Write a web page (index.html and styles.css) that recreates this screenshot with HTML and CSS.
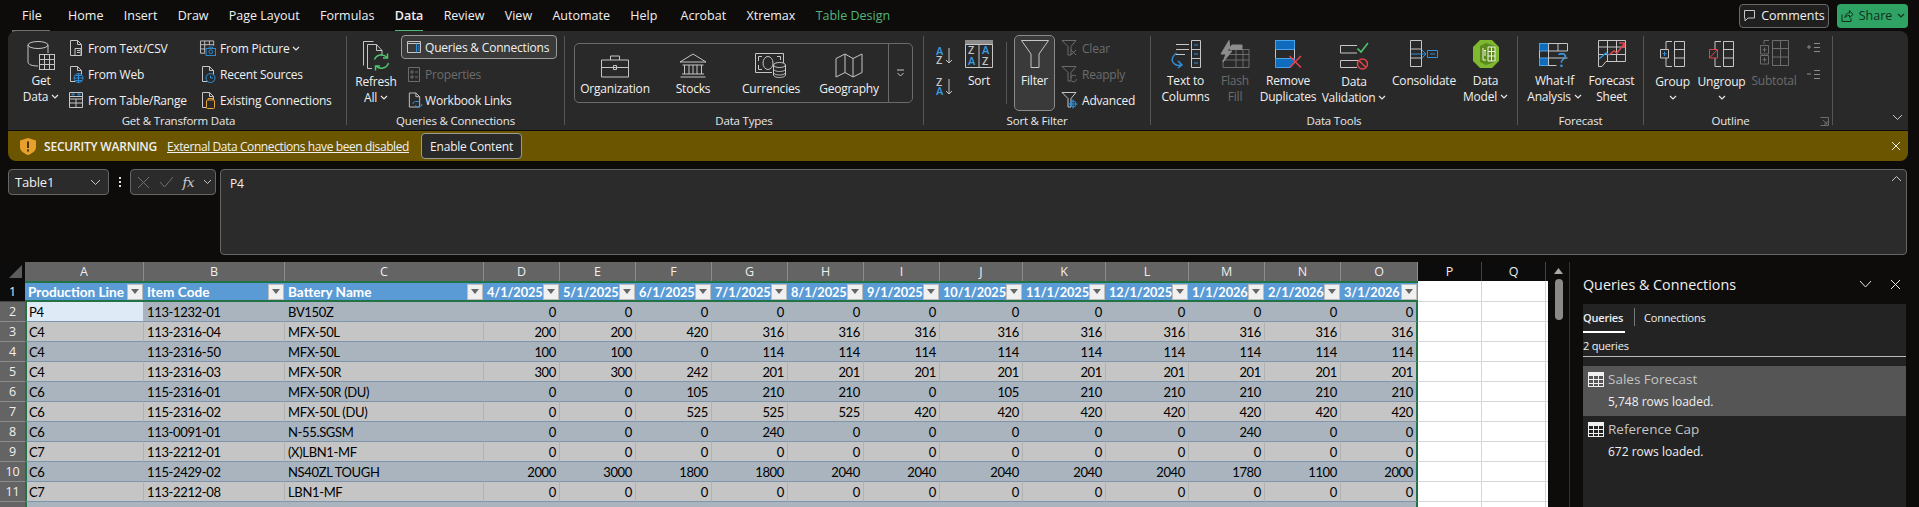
FILE: index.html
```html
<!DOCTYPE html>
<html lang="en">
<head>
    <meta charset="UTF-8">
    <title>Excel - Data tab</title>
    <link rel="stylesheet" href="styles.css">
</head>
<body>
    <!-- shared icon parts -->
    <svg class="defs">
        <symbol id="chev" viewBox="0 0 8 5"><path d="M1 1l3 3 3-3"/></symbol>
        <symbol id="page" viewBox="0 0 16 18"><path d="M2.5 1.5h7l4 4v11h-11zM9.5 1.5v4h4"/></symbol>
        <symbol id="funnel" viewBox="0 0 17 18"><path d="M1 1.500h14l-5 6v8.500H7V7.500z"/></symbol>
    </svg>

    <!-- Tabs -->
    <nav class="tabs">
        <span class="tab tab-file">File</span>
        <span class="tab">Home</span>
        <span class="tab">Insert</span>
        <span class="tab">Draw</span>
        <span class="tab">Page Layout</span>
        <span class="tab">Formulas</span>
        <span class="tab tab-active">Data</span>
        <span class="tab">Review</span>
        <span class="tab">View</span>
        <span class="tab">Automate</span>
        <span class="tab">Help</span>
        <span class="tab tab-acrobat">Acrobat</span>
        <span class="tab">Xtremax</span>
        <span class="tab tab-context">Table Design</span>
        <div class="actions">
            <button class="btn-comments">
                <svg class="ico" width="13" height="13" viewBox="0 0 13 13"><path d="M1.500 1.500h10v7.500H5l-3 3V9H1.500z"/></svg>
                Comments
            </button>
            <button class="btn-share">
                <svg class="ico ico-dark" width="14" height="14" viewBox="0 0 14 14"><path d="M2 5.500v7h9V9M5 8.500c0-3 2-4.500 4.500-4.500V1.500L13 5.500 9.500 8.500V6.500C7.500 6.500 6 7 5 8.500z"/></svg>
                Share
                <svg class="chev chev-dark"><use href="#chev"/></svg>
            </button>
        </div>
    </nav>

    <!-- Ribbon -->
    <section class="ribbon">
        <div class="group g-transform">
            <div class="group-body">
                <div class="big w-getdata">
                    <div class="big-icon">
                        <svg class="ico" width="28" height="30" viewBox="0 0 28 30"><ellipse cx="11" cy="5" rx="10" ry="3.500"/><path d="M1 5v17c0 2.500 4 4 10 4M21 5v8"/><rect x="12.500" y="14.500" width="15" height="15" fill="#292929"/><path d="M12.500 19.500h15M12.500 24.500h15M17.500 14.500v15M22.500 14.500v15"/></svg>
                    </div>
                    <span>Get</span>
                    <span>Data <svg class="chev"><use href="#chev"/></svg></span>
                </div>
                <div class="small-col w-col1">
                    <div class="small">
                        <svg class="ico" width="16" height="18"><use href="#page"/><path d="M7 9.500h6v7H7zM9 11.500h3M9 13.500h3"/></svg>
                        From Text/CSV
                    </div>
                    <div class="small">
                        <svg class="ico" width="16" height="18"><use href="#page"/><circle class="s-blue" cx="10.500" cy="13" r="4.500" fill="#292929"/><path class="s-blue" d="M6 13h9M10.500 8.500v9M7.500 10.500h6M7.500 15.500h6"/></svg>
                        From Web
                    </div>
                    <div class="small">
                        <svg class="ico" width="16" height="18" viewBox="0 0 16 18"><path d="M1.500 1.500h13v15h-13zM1.500 8h13M1.500 12h13M8 8v8.500M1.500 5.500h13"/><path class="s-blue" d="M3.500 3h3l-1.500 1.500zM9.500 3h3L11 4.500z"/></svg>
                        From Table/Range
                    </div>
                </div>
                <div class="small-col">
                    <div class="small">
                        <svg class="ico" width="16" height="18" viewBox="0 0 17 18"><path d="M.5 1.500h14v5M.5 14.500V1.500M.5 5.500h14M.5 10h5M.5 14.500h5M5 1.500V14M10 1.500v4"/><rect class="s-blue" x="6.500" y="9.500" width="10" height="7.500" fill="#292929"/><circle class="s-blue" cx="11.500" cy="13" r="2"/><path class="s-blue" d="M9 9.500l1-1.500h3l1 1.500"/></svg>
                        <span>From Picture <svg class="chev"><use href="#chev"/></svg></span>
                    </div>
                    <div class="small">
                        <svg class="ico" width="16" height="18"><use href="#page"/><circle class="s-blue" cx="10.500" cy="13" r="4.500" fill="#292929"/><path class="s-blue" d="M10.500 10.500V13h2.500"/></svg>
                        Recent Sources
                    </div>
                    <div class="small">
                        <svg class="ico" width="16" height="18"><use href="#page"/><rect class="s-orange" x="6.500" y="9" width="8" height="8.500" rx="1" fill="#292929"/><path class="s-orange" d="M8 9V7.500h5V9"/></svg>
                        Existing Connections
                    </div>
                </div>
            </div>
            <div class="group-label lbl-transform">Get &amp; Transform Data</div>
        </div>

        <div class="group g-queries">
            <div class="group-body">
                <div class="big low w-refresh">
                    <div class="big-icon">
                        <svg class="ico" width="28" height="30" viewBox="0 0 28 30"><path d="M1.500 24.500V.500h10M5.500 27.500V3.500h9l5.500 6v5M5.500 27.500H10M14.500 3.500v6h5.500"/><path class="s-green s-wide" d="M12.500 18.500a7.500 7.500 0 0 1 12.500-2M26.500 22a7.500 7.500 0 0 1-12.500 3"/><path class="s-green s-wide" d="M25.500 12.500v4.500H21M13.500 29.500V25H18"/></svg>
                    </div>
                    <span>Refresh</span>
                    <span>All <svg class="chev"><use href="#chev"/></svg></span>
                </div>
                <div class="small-col w-qcol">
                    <div class="small small-on">
                        <svg class="ico" width="15" height="14" viewBox="0 0 15 14"><path d="M.5 1.500h13v11H.5zM.5 3.500h13"/><path class="s-blue" d="M9.500 3.500v9M11 6h1.500M11 8h1.500M11 10h1.500"/></svg>
                        Queries &amp; Connections
                    </div>
                    <div class="small small-off">
                        <svg class="ico ico-off" width="15" height="18" viewBox="0 0 15 18"><path d="M1.500 2.500h11v14h-11zM4 6h2v2H4zM4 11h2v2H4zM8 7h3M8 12h3"/></svg>
                        Properties
                    </div>
                    <div class="small">
                        <svg class="ico" width="15" height="18"><use href="#page"/><path class="s-blue" d="M6 13c0-1.500 1-2.500 2.500-2.500H11c1 0 1.500 1 1.500 1.500M15 13c0 1.500-1 2.500-2.500 2.500H10c-1 0-1.500-1-1.500-1.500"/></svg>
                        Workbook Links
                    </div>
                </div>
            </div>
            <div class="group-label lbl-queries">Queries &amp; Connections</div>
        </div>

        <div class="group g-types">
            <div class="group-body">
                <div class="gallery">
                    <div class="gallery-item">
                        <svg class="ico" width="30" height="24" viewBox="0 0 30 24"><path d="M1.500 6.500h27v17h-27zM1.500 14h27M10.500 6.500V2.500h9v4M13.500 12h3v4h-3z"/></svg>
                        <span>Organization</span>
                    </div>
                    <div class="gallery-item">
                        <svg class="ico" width="28" height="24" viewBox="0 0 28 24"><path d="M1 8.500L14 .500l13 8zM3.500 11.500h21M5.500 11.500v9M10 11.500v9M14 11.500v9M18 11.500v9M22.500 11.500v9M3 20.500h22M1.500 23.500h25"/></svg>
                        <span>Stocks</span>
                    </div>
                    <div class="gallery-item">
                        <svg class="ico" width="32" height="25" viewBox="0 0 32 25"><path d="M17 19.500H.5V.500h28V10"/><path d="M3.500 8V3.500H7M3.500 12v4.500H7M25.500 7V3.500H22"/><ellipse cx="13" cy="10" rx="5" ry="6.500"/><ellipse cx="24.500" cy="12" rx="6" ry="2.500" fill="#292929"/><path d="M18.500 12v10c0 1.500 3 2.500 6 2.500s6-1 6-2.500V12M18.500 16c0 1.500 3 2.500 6 2.500s6-1 6-2.500M18.500 19.500c0 1.500 3 2.500 6 2.500s6-1 6-2.500"/></svg>
                        <span>Currencies</span>
                    </div>
                    <div class="gallery-item">
                        <svg class="ico" width="28" height="24" viewBox="0 0 28 24"><path d="M1 5l9-4.500 8 4.500 9-4.500V19l-9 4.500-8-4.500-9 4.500zM10 .500V19M18 5v18.500"/></svg>
                        <span>Geography</span>
                    </div>
                    <div class="gallery-more">
                        <svg class="ico" width="9" height="8" viewBox="0 0 9 8"><path d="M1 1h7M1.500 4l3 3 3-3"/></svg>
                    </div>
                </div>
            </div>
            <div class="group-label lbl-types">Data Types</div>
        </div>

        <div class="group g-sort">
            <div class="group-body">
                <div class="sort-col">
                    <svg class="ico" width="18" height="18" viewBox="0 0 18 18"><text class="ltr ltr-blue" x="0" y="8">A</text><text class="ltr" x="0" y="17">Z</text><path d="M13 1v15M10 13l3 3 3-3"/></svg>
                    <svg class="ico" width="18" height="18" viewBox="0 0 18 18"><text class="ltr" x="0" y="8">Z</text><text class="ltr ltr-blue" x="0" y="17">A</text><path d="M13 1v15M10 13l3 3 3-3"/></svg>
                </div>
                <div class="big w-sort">
                    <div class="big-icon">
                        <svg class="ico" width="28" height="28" viewBox="0 0 28 28"><rect class="f-gray" x=".5" y=".5" width="27" height="4"/><path d="M.5 4.500h27v23H.5zM14 4.500v23"/><text class="ltr" x="3" y="14">Z</text><text class="ltr ltr-blue" x="17" y="14">A</text><text class="ltr ltr-blue" x="3" y="25">A</text><text class="ltr" x="17" y="25">Z</text></svg>
                    </div>
                    <span>Sort</span>
                </div>
                <div class="sort-sep"></div>
                <div class="big filter-on">
                    <div class="big-icon">
                        <svg class="ico" width="28" height="28" viewBox="0 0 28 28"><path d="M.5 .5h27L18 14v13.500h-8V14z"/></svg>
                    </div>
                    <span>Filter</span>
                </div>
                <div class="small-col w-filter">
                    <div class="small small-off">
                        <svg class="ico ico-off" width="17" height="18"><use href="#funnel"/><path d="M10 11l5 5M15 11l-5 5"/></svg>
                        Clear
                    </div>
                    <div class="small small-off">
                        <svg class="ico ico-off" width="17" height="18"><use href="#funnel"/><path d="M10 13a3 3 0 0 1 5-2M15.500 14a3 3 0 0 1-5 2"/></svg>
                        Reapply
                    </div>
                    <div class="small">
                        <svg class="ico" width="17" height="18"><use href="#funnel"/><circle class="s-blue" cx="12" cy="13" r="3"/><path class="s-blue" d="M12 8.500v9M7.500 13h9"/></svg>
                        Advanced
                    </div>
                </div>
            </div>
            <div class="group-label lbl-sort">Sort &amp; Filter</div>
        </div>

        <div class="group g-tools">
            <div class="group-body">
                <div class="big w-text">
                    <div class="big-icon">
                        <svg class="ico" width="30" height="28" viewBox="0 0 30 28"><path d="M5 4.500h13M5 9.500h13M5 14.500h9M20.500 .5h9v27h-9zM20.500 9.500h9M20.500 18.500h9"/><path class="s-blue" d="M23 5h4M23 14h4M23 23h4"/><path class="s-blue s-wide" d="M5.500 13C2 16 .5 19 1.500 21.500 3 25 7 26 10 25M7 21l4 4-4 3"/></svg>
                    </div>
                    <span>Text to</span>
                    <span>Columns</span>
                </div>
                <div class="big off w-flash">
                    <div class="big-icon">
                        <svg class="ico ico-off" width="30" height="28" viewBox="0 0 30 28"><path d="M10 9.500h19v18H3V20M3 20h26M10 14.500h19M16 9.500v18M23 9.500v18"/><path class="f-gray" d="M9 .5L1 14h5l-3 8 9-11H7l5-6h10v4.500H10z"/></svg>
                    </div>
                    <span>Flash</span>
                    <span>Fill</span>
                </div>
                <div class="big w-remove">
                    <div class="big-icon">
                        <svg class="ico" width="27" height="28" viewBox="0 0 27 28"><rect class="f-blue" x=".5" y=".5" width="19" height="9"/><path d="M.5 9.500v9h19v-9"/><path class="f-blue" d="M.5 18.500h19V22l-4 5.500H.5z"/><path class="s-red s-wide" d="M14.500 16L26 27.500M26 16L14.500 27.500"/></svg>
                    </div>
                    <span>Remove</span>
                    <span>Duplicates</span>
                </div>
                <div class="big low w-valid">
                    <div class="big-icon">
                        <svg class="ico" width="29" height="28" viewBox="0 0 29 28"><path d="M17 4.500H.5V12H17M19 19.500H.5v7H17"/><path class="s-green s-wide" d="M17.500 7.500l3.500 3.500 7-9"/><circle class="s-red s-wide" cx="22.500" cy="23" r="5"/><path class="s-red s-wide" d="M19 19.500l7 7"/></svg>
                    </div>
                    <span>Data</span>
                    <span>Validation <svg class="chev"><use href="#chev"/></svg></span>
                </div>
                <div class="big w-cons">
                    <div class="big-icon">
                        <svg class="ico" width="28" height="28" viewBox="0 0 28 28"><path d="M.5 .5h11v8.500H.5zM.5 9v9h11V9M.5 18v8.500h11V18"/><path class="s-blue" d="M1 14h15M12 10l4 4-4 4M17.500 10.500h10v7h-10zM20 14h5"/></svg>
                    </div>
                    <span>Consolidate</span>
                </div>
                <div class="big w-model">
                    <div class="big-icon">
                        <svg width="26" height="28" viewBox="0 0 26 28"><path class="f-lime" d="M7 0h12l7 7v14l-7 7H7l-7-7V7z"/><path class="f-moss" d="M7 6l6-3 9 3v16l-9 3-6-3z"/><path class="s-white" d="M10 8v12h3M15 7h7v14h-7zM15 11.500h7M15 16h7M18.500 7v14M11 11l1-1 1 1M12 10v6"/></svg>
                    </div>
                    <span>Data</span>
                    <span>Model <svg class="chev"><use href="#chev"/></svg></span>
                </div>
            </div>
            <div class="group-label lbl-tools">Data Tools</div>
        </div>

        <div class="group g-forecast">
            <div class="group-body">
                <div class="big w-whatif">
                    <div class="big-icon icon-pushed">
                        <svg class="ico" width="31" height="27" viewBox="0 0 31 27"><rect class="f-blue" x=".5" y=".5" width="9" height="7.500"/><rect class="f-blue" x=".5" y="15" width="9" height="7.500"/><path d="M9.500 .5h19v7.500h-19zM9.500 8v14.500h8M19 .5V8M9.500 15h19M.5 8v7"/><text class="qm" x="19" y="24">?</text></svg>
                    </div>
                    <span>What-If</span>
                    <span>Analysis <svg class="chev"><use href="#chev"/></svg></span>
                </div>
                <div class="big w-fsheet">
                    <div class="big-icon">
                        <svg class="ico" width="28" height="28" viewBox="0 0 28 28"><path d="M.5 .5h27v21H8l-4 5H.5zM.5 7h27M.5 14.500h27M9.500 .5v21M18.500 .5v21"/><path class="s-blue s-wide" d="M1 19l7-6 3 2"/><path class="s-red s-wide" d="M11 15l5-4 3 2 7-9M21 3h5.500v5"/></svg>
                    </div>
                    <span>Forecast</span>
                    <span>Sheet</span>
                </div>
            </div>
            <div class="group-label lbl-forecast">Forecast</div>
        </div>

        <div class="group g-outline">
            <div class="group-body">
                <div class="big low w-group">
                    <div class="big-icon">
                        <svg class="ico" width="25" height="26" viewBox="0 0 25 26"><path d="M14.500 .5h10v25h-10zM14.500 8.500h10M14.500 17h10M12 .5H6V8M6 17v8.500h6M.5 8.500h8v8.500h-8z"/><path class="s-blue" d="M4.500 10.500v4.500M2.500 12.700h4"/></svg>
                    </div>
                    <span>Group</span>
                    <span><svg class="chev"><use href="#chev"/></svg></span>
                </div>
                <div class="big low w-ungroup">
                    <div class="big-icon">
                        <svg class="ico" width="25" height="26" viewBox="0 0 25 26"><path d="M14.500 .5h10v25h-10zM14.500 8.500h10M14.500 17h10M12 .5H6V8M6 17v8.500h6"/><path class="s-red" d="M.5 8.500h8v8.500h-8zM1 16.500l7-7.500"/></svg>
                    </div>
                    <span>Ungroup</span>
                    <span><svg class="chev"><use href="#chev"/></svg></span>
                </div>
                <div class="big off w-subtotal">
                    <div class="big-icon">
                        <svg class="ico ico-off" width="29" height="26" viewBox="0 0 29 26"><path d="M12.500 .5h16v25h-16zM12.500 8.500h16M12.500 17h16M20.500 .5v25M9 .5H4V4M.5 5.500h8v8.500h-8zM.5 15.500h8v8.500h-8zM4.500 7.500v4.500M2.500 9.700h4M4.500 17.500V22M2.500 19.700h4"/></svg>
                    </div>
                    <span>Subtotal</span>
                </div>
                <div class="outline-col">
                    <svg class="ico ico-off2" width="15" height="13" viewBox="0 0 15 13"><path d="M1 6h4M3 4v4M8 2.500h6M8 6.500h6M8 10.500h6"/></svg>
                    <svg class="ico ico-off2" width="15" height="13" viewBox="0 0 15 13"><path d="M1 6h4M8 2.500h6M8 6.500h6M8 10.500h6"/></svg>
                </div>
            </div>
            <div class="group-label lbl-outline">Outline</div>
            <svg class="launcher ico ico-off" width="9" height="9" viewBox="0 0 9 9"><path d="M.5 .5h8v8h-8M3 3l4 4M7 4v3H4"/></svg>
        </div>

        <svg class="collapse ico" width="11" height="7" viewBox="0 0 11 7"><path d="M1 1l4.500 4.500L10 1"/></svg>
    </section>

    <!-- Security warning -->
    <section class="warning">
        <svg class="shield" width="16" height="17" viewBox="0 0 16 17"><path d="M8 0l8 2.500V9c0 4-4 6.500-8 8-4-1.500-8-4-8-8V2.500z"/><rect x="7" y="3.500" width="2" height="6.500"/><rect x="7" y="11.500" width="2" height="2"/></svg>
        <strong>SECURITY WARNING</strong>
        <a class="warn-link">External Data Connections have been disabled</a>
        <button class="btn-enable">Enable Content</button>
        <svg class="warn-close ico" width="10" height="10" viewBox="0 0 10 10"><path d="M1 1l8 8M9 1l-8 8"/></svg>
    </section>

    <!-- Formula bar -->
    <section class="formula-row">
        <div class="name-box">
            Table1
            <svg class="ico" width="11" height="7" viewBox="0 0 11 7"><path d="M1 1l4.500 4.500L10 1"/></svg>
        </div>
        <div class="dots"><i></i><i></i><i></i></div>
        <div class="fx-box">
            <svg class="ico ico-dim" width="13" height="13" viewBox="0 0 13 13"><path d="M1 1l11 11M12 1L1 12"/></svg>
            <svg class="ico ico-dim" width="15" height="12" viewBox="0 0 15 12"><path d="M1 6l4.500 5L14 1"/></svg>
            <em class="fx">fx</em>
            <svg class="ico" width="9" height="6" viewBox="0 0 9 6"><path d="M1 1l3.500 3.500L8 1"/></svg>
        </div>
        <div class="formula-input">
            P4
            <svg class="ico" width="11" height="7" viewBox="0 0 11 7"><path d="M1 6l4.500-4.500L10 6"/></svg>
        </div>
    </section>

    <!-- Sheet and side panel -->
    <main class="workspace">
        <div class="sheet">
            <table>
                <colgroup>
                    <col class="c-rh"><col class="c-a"><col class="c-b"><col class="c-c">
                    <col class="c-d"><col class="c-d"><col class="c-d"><col class="c-d"><col class="c-d"><col class="c-d">
                    <col class="c-j"><col class="c-j"><col class="c-j">
                    <col class="c-d"><col class="c-d"><col class="c-o">
                    <col class="c-p"><col class="c-p"><col class="c-end">
                </colgroup>
                <tr class="cols">
                    <th class="corner"><svg width="13" height="13" viewBox="0 0 13 13"><path d="M13 0v13H0z"/></svg></th>
                    <th>A</th><th>B</th><th>C</th><th>D</th><th>E</th><th>F</th><th>G</th><th>H</th><th>I</th><th>J</th><th>K</th><th>L</th><th>M</th><th>N</th><th>O</th>
                    <th class="plain">P</th><th class="plain">Q</th><th class="plain end"></th>
                </tr>
                <tr class="head">
                    <th class="rh rh-dark">1</th>
                    <th><div class="hc hc-text">Production Line<b class="fb"></b></div></th>
                    <th><div class="hc hc-text">Item Code<b class="fb"></b></div></th>
                    <th><div class="hc hc-text">Battery Name<b class="fb"></b></div></th>
                    <th><div class="hc">4/1/2025<b class="fb"></b></div></th>
                    <th><div class="hc">5/1/2025<b class="fb"></b></div></th>
                    <th><div class="hc">6/1/2025<b class="fb"></b></div></th>
                    <th><div class="hc">7/1/2025<b class="fb"></b></div></th>
                    <th><div class="hc">8/1/2025<b class="fb"></b></div></th>
                    <th><div class="hc">9/1/2025<b class="fb"></b></div></th>
                    <th><div class="hc">10/1/2025<b class="fb"></b></div></th>
                    <th><div class="hc">11/1/2025<b class="fb"></b></div></th>
                    <th><div class="hc">12/1/2025<b class="fb"></b></div></th>
                    <th><div class="hc">1/1/2026<b class="fb"></b></div></th>
                    <th><div class="hc">2/1/2026<b class="fb"></b></div></th>
                    <th><div class="hc">3/1/2026<b class="fb"></b></div></th>
                    <td class="free"></td><td class="free"></td><td class="free end"></td>
                </tr>
                <tr class="band">
                    <th class="rh">2</th><td class="active">P4</td><td>113-1232-01</td><td>BV150Z</td>
                    <td>0</td><td>0</td><td>0</td><td>0</td><td>0</td><td>0</td><td>0</td><td>0</td><td>0</td><td>0</td><td>0</td><td>0</td>
                    <td class="free"></td><td class="free"></td><td class="free end"></td>
                </tr>
                <tr>
                    <th class="rh">3</th><td>C4</td><td>113-2316-04</td><td>MFX-50L</td>
                    <td>200</td><td>200</td><td>420</td><td>316</td><td>316</td><td>316</td><td>316</td><td>316</td><td>316</td><td>316</td><td>316</td><td>316</td>
                    <td class="free"></td><td class="free"></td><td class="free end"></td>
                </tr>
                <tr class="band">
                    <th class="rh">4</th><td>C4</td><td>113-2316-50</td><td>MFX-50L</td>
                    <td>100</td><td>100</td><td>0</td><td>114</td><td>114</td><td>114</td><td>114</td><td>114</td><td>114</td><td>114</td><td>114</td><td>114</td>
                    <td class="free"></td><td class="free"></td><td class="free end"></td>
                </tr>
                <tr>
                    <th class="rh">5</th><td>C4</td><td>113-2316-03</td><td>MFX-50R</td>
                    <td>300</td><td>300</td><td>242</td><td>201</td><td>201</td><td>201</td><td>201</td><td>201</td><td>201</td><td>201</td><td>201</td><td>201</td>
                    <td class="free"></td><td class="free"></td><td class="free end"></td>
                </tr>
                <tr class="band">
                    <th class="rh">6</th><td>C6</td><td>115-2316-01</td><td>MFX-50R (DU)</td>
                    <td>0</td><td>0</td><td>105</td><td>210</td><td>210</td><td>0</td><td>105</td><td>210</td><td>210</td><td>210</td><td>210</td><td>210</td>
                    <td class="free"></td><td class="free"></td><td class="free end"></td>
                </tr>
                <tr>
                    <th class="rh">7</th><td>C6</td><td>115-2316-02</td><td>MFX-50L (DU)</td>
                    <td>0</td><td>0</td><td>525</td><td>525</td><td>525</td><td>420</td><td>420</td><td>420</td><td>420</td><td>420</td><td>420</td><td>420</td>
                    <td class="free"></td><td class="free"></td><td class="free end"></td>
                </tr>
                <tr class="band">
                    <th class="rh">8</th><td>C6</td><td>113-0091-01</td><td>N-55.SGSM</td>
                    <td>0</td><td>0</td><td>0</td><td>240</td><td>0</td><td>0</td><td>0</td><td>0</td><td>0</td><td>240</td><td>0</td><td>0</td>
                    <td class="free"></td><td class="free"></td><td class="free end"></td>
                </tr>
                <tr>
                    <th class="rh">9</th><td>C7</td><td>113-2212-01</td><td>(X)LBN1-MF</td>
                    <td>0</td><td>0</td><td>0</td><td>0</td><td>0</td><td>0</td><td>0</td><td>0</td><td>0</td><td>0</td><td>0</td><td>0</td>
                    <td class="free"></td><td class="free"></td><td class="free end"></td>
                </tr>
                <tr class="band">
                    <th class="rh">10</th><td>C6</td><td>115-2429-02</td><td>NS40ZL TOUGH</td>
                    <td>2000</td><td>3000</td><td>1800</td><td>1800</td><td>2040</td><td>2040</td><td>2040</td><td>2040</td><td>2040</td><td>1780</td><td>1100</td><td>2000</td>
                    <td class="free"></td><td class="free"></td><td class="free end"></td>
                </tr>
                <tr>
                    <th class="rh">11</th><td>C7</td><td>113-2212-08</td><td>LBN1-MF</td>
                    <td>0</td><td>0</td><td>0</td><td>0</td><td>0</td><td>0</td><td>0</td><td>0</td><td>0</td><td>0</td><td>0</td><td>0</td>
                    <td class="free"></td><td class="free"></td><td class="free end"></td>
                </tr>
                <tr class="band">
                    <th class="rh"></th><td></td><td></td><td></td>
                    <td></td><td></td><td></td><td></td><td></td><td></td><td></td><td></td><td></td><td></td><td></td><td></td>
                    <td class="free"></td><td class="free"></td><td class="free end"></td>
                </tr>
            </table>
        </div>

        <div class="scrollbar">
            <svg width="9" height="6" viewBox="0 0 9 6"><path d="M4.500 0L9 6H0z"/></svg>
            <div class="thumb"></div>
        </div>

        <aside class="panel">
            <header class="panel-head">
                <h2>Queries &amp; Connections</h2>
                <svg class="ico ico-bright" width="13" height="8" viewBox="0 0 13 8"><path d="M1 1l5.500 6L12 1"/></svg>
                <svg class="ico ico-bright" width="11" height="11" viewBox="0 0 11 11"><path d="M1 1l9 9M10 1l-9 9"/></svg>
            </header>
            <div class="panel-body">
                <div class="panel-tabs">
                    <span class="ptab ptab-on">Queries</span>
                    <span class="ptab-sep"></span>
                    <span class="ptab">Connections</span>
                </div>
                <div class="count">2 queries</div>
                <div class="query query-on">
                    <svg class="qicon" width="16" height="15" viewBox="0 0 16 15"><rect width="16" height="15"/><path d="M1 4h4v3H1zM6 4h4v3H6zM11 4h4v3h-4zM1 8h4v3H1zM6 8h4v3H6zM11 8h4v3h-4zM1 12h4v2H1zM6 12h4v2H6zM11 12h4v2h-4z"/></svg>
                    <div>
                        <div class="qname">Sales Forecast</div>
                        <div class="qrows">5,748 rows loaded.</div>
                    </div>
                </div>
                <div class="query">
                    <svg class="qicon" width="16" height="15" viewBox="0 0 16 15"><rect width="16" height="15"/><path d="M1 4h4v3H1zM6 4h4v3H6zM11 4h4v3h-4zM1 8h4v3H1zM6 8h4v3H6zM11 8h4v3h-4zM1 12h4v2H1zM6 12h4v2H6zM11 12h4v2h-4z"/></svg>
                    <div>
                        <div class="qname">Reference Cap</div>
                        <div class="qrows">672 rows loaded.</div>
                    </div>
                </div>
            </div>
        </aside>
    </main>
</body>
</html>
```

FILE: styles.css
```css
* {
    box-sizing: border-box;
}

html, body {
    height: 507px;
    overflow: hidden;
}

body {
    margin: 0;
    background-color: #0e0c0b;
    color: #f0f0f0;
    font-family: "Open Sans", sans-serif;
    font-size: 12px;
    letter-spacing: -0.2px;
}

.defs {
    display: none;
}

button {
    font-family: inherit;
    font-size: 12px;
    letter-spacing: inherit;
    color: inherit;
    cursor: pointer;
}

/* Icons */
.ico {
    fill: none;
    stroke: #c6c6c6;
    stroke-width: 1;
    flex: none;
    overflow: visible;
}

.ico-off { stroke: #6c6c6c; }
.ico-off2 { stroke: #8a8a8a; }
.ico-dim { stroke: #6e6e6e; }
.ico-bright { stroke: #e6e6e6; }
.ico-dark { stroke: #10301e; }

.s-blue { stroke: #2f8fd8; }
.s-green { stroke: #4fc86d; }
.s-red { stroke: #e0454c; }
.s-orange { stroke: #e8a33d; }
.s-white { stroke: #eef5e0; fill: none; }
.s-wide { stroke-width: 1.5; }

.f-blue { fill: #0f6cbd; stroke: #4aa3e8; }
.f-gray { fill: #8c8c8c; stroke: #8c8c8c; }
.f-lime { fill: #7fb82e; }
.f-moss { fill: #5b8a1e; }

.ltr {
    font-family: "Open Sans", sans-serif;
    font-size: 11px;
    font-weight: 600;
    letter-spacing: 0;
    fill: #c6c6c6;
    stroke: none;
}

.ltr-blue { fill: #3c9be0; }

.qm {
    font-family: "Open Sans", sans-serif;
    font-size: 20px;
    fill: #3c9be0;
    stroke: none;
}

.chev {
    width: 8px;
    height: 5px;
    fill: none;
    stroke: #e6e6e6;
    stroke-width: 1.2;
    vertical-align: 2px;
}

.chev-dark { stroke: #10301e; }

/* Tabs */
.tabs {
    height: 31px;
    display: flex;
    align-items: center;
    padding-left: 22px;
    gap: 20.300px;
    font-size: 12.5px;
    letter-spacing: 0;
}

.tab {
    position: relative;
    line-height: 18px;
    padding-top: 1px;
}

.tab-file {
    margin-right: 6px;
}

.tab-acrobat {
    margin-left: 3px;
}

.tab-file::after,
.tab-active::after {
    content: "";
    position: absolute;
    left: -10px;
    right: -8px;
    bottom: -7px;
    height: 2px;
    background-color: #707070;
}

.tab-active {
    font-weight: 600;
}

.tab-active::after {
    left: 0;
    right: 0;
    background-color: #4cb877;
}

.tab-context {
    color: #52b67a;
}

.actions {
    margin-left: auto;
    margin-right: 11px;
    display: flex;
    gap: 8px;
}

.btn-comments {
    width: 90px;
    height: 24px;
    display: flex;
    align-items: center;
    justify-content: center;
    gap: 5px;
    padding: 0;
    font-size: 12.5px;
    background-color: #1f1f1f;
    border: 1px solid #6a6a6a;
    border-radius: 4px;
}

.btn-share {
    width: 71px;
    height: 24px;
    display: flex;
    align-items: center;
    justify-content: center;
    gap: 5px;
    padding: 0;
    font-size: 12.5px;
    background-color: #2ea364;
    color: #10301e;
    border: none;
    border-radius: 4px;
}

/* Ribbon */
.ribbon {
    position: relative;
    height: 99px;
    margin: 0 11px 0 8px;
    padding-top: 5px;
    display: flex;
    background-color: #292929;
    border-radius: 8px 8px 0 0;
}

.group {
    position: relative;
    height: 89px;
    border-right: 1px solid #555;
    flex: none;
}

.g-transform { width: 339px; }
.g-queries { width: 218px; }
.g-types { width: 359px; }
.g-sort { width: 227px; }
.g-tools { width: 367px; }
.g-forecast { width: 126px; }
.g-outline { width: 189px; }

.group-body {
    height: 78px;
    display: flex;
    align-items: flex-start;
}

.group-label {
    line-height: 14px;
    text-align: center;
    white-space: nowrap;
    font-size: 11.5px;
    color: #e8e8e8;
}

.lbl-transform { padding-left: 3px; }
.lbl-outline { padding-right: 15px; }

/* Big buttons */
.big {
    flex: none;
    display: flex;
    flex-direction: column;
    align-items: center;
    padding-top: 4px;
    line-height: 16px;
    white-space: nowrap;
}

.big.low {
    padding-top: 5px;
}

.big.off {
    color: #6c6c6c;
}

.big-icon {
    height: 33px;
}

.icon-pushed {
    padding-top: 3px;
}

.g-transform .w-getdata { width: 50px; margin-left: 8px; }
.w-refresh { width: 50px; margin-left: 4px; }
.w-sort { width: 34px; margin-left: 8px; }
.w-text { width: 69px; }
.w-flash { width: 30px; }
.w-remove { width: 76px; }
.w-valid { width: 56px; }
.w-cons { width: 84px; }
.w-model { width: 39px; }
.w-whatif { width: 73px; }
.w-fsheet { width: 41px; }
.w-group { width: 57px; }
.w-ungroup { width: 41px; }
.w-subtotal { width: 64px; }

/* Small buttons */
.small-col {
    flex: none;
    margin-top: -1px;
    white-space: nowrap;
}

.w-col1 { width: 132px; margin-left: 2px; }
.w-qcol { width: 156px; }
.w-filter { margin-left: 6px; }

.small {
    height: 26px;
    display: flex;
    align-items: center;
    gap: 4px;
}

.w-qcol .small {
    padding-left: 6px;
    gap: 3px;
}

.w-qcol .small-on {
    height: 24px;
    margin-bottom: 2px;
    background-color: #3a3a3a;
    border: 1px solid #9a9a9a;
    border-radius: 4px;
    padding-left: 5px;
}

.small-off {
    color: #6c6c6c;
}

/* Data types gallery */
.gallery {
    width: 339px;
    height: 60px;
    margin: 7px 0 0 9px;
    padding-left: 1px;
    display: flex;
    border: 1px solid #6a6a6a;
    border-radius: 5px;
}

.gallery-item {
    width: 78px;
    display: flex;
    flex-direction: column;
    align-items: center;
    padding-top: 9px;
    white-space: nowrap;
}

.gallery-item svg {
    height: 25px;
}

.gallery-item span {
    margin-top: 3px;
    line-height: 16px;
}

.gallery-more {
    flex: 1;
    display: flex;
    align-items: center;
    justify-content: center;
    border-left: 1px solid #6a6a6a;
}

/* Sort & filter */
.sort-col {
    margin: 11px 0 0 12px;
    display: flex;
    flex-direction: column;
    gap: 13px;
}

.sort-sep {
    width: 1px;
    height: 62px;
    margin: 6px 7px 0 10px;
    background-color: #555;
}

.filter-on {
    width: 41px;
    height: 76px;
    margin-top: -1px;
    background-color: #3a3a3a;
    border: 1px solid #8a8a8a;
    border-radius: 5px;
}

/* Outline */
.outline-col {
    display: flex;
    flex-direction: column;
    gap: 14px;
    margin-top: 5px;
}

.launcher {
    position: absolute;
    right: 3px;
    bottom: -1px;
}

.collapse {
    position: absolute;
    right: 5px;
    bottom: 9px;
}

/* Security warning */
.warning {
    height: 30px;
    margin: 1px 11px 0 8px;
    padding-left: 12px;
    display: flex;
    align-items: center;
    background-color: #6b5500;
    border-radius: 0 0 8px 8px;
}

.shield {
    fill: #e8a02c;
    margin-right: 8px;
}

.shield rect {
    fill: #4a3500;
}

.warning strong {
    font-weight: 600;
    margin-right: 10px;
}

.warn-link {
    text-decoration: underline;
    letter-spacing: -0.4px;
    margin-right: 12px;
}

.btn-enable {
    width: 101px;
    height: 26px;
    padding: 0;
    background-color: #292929;
    border: 1px solid #9a9a9a;
    border-radius: 4px;
}

.warn-close {
    margin-left: auto;
    margin-right: 7px;
    stroke: #f0f0f0;
}

/* Formula bar */
.formula-row {
    height: 86px;
    margin: 8px 12px 0 8px;
    display: flex;
    align-items: flex-start;
}

.name-box {
    width: 101px;
    height: 26px;
    padding: 0 7px 0 6px;
    display: flex;
    align-items: center;
    justify-content: space-between;
    font-size: 13px;
    background-color: #2b2b2b;
    border: 1px solid #666;
    border-radius: 4px;
}

.dots {
    width: 21px;
    height: 26px;
    display: flex;
    flex-direction: column;
    align-items: center;
    justify-content: center;
    gap: 2px;
}

.dots i {
    width: 2px;
    height: 2px;
    background-color: #e0e0e0;
}

.fx-box {
    width: 86px;
    height: 26px;
    padding: 0 3px 0 6px;
    display: flex;
    align-items: center;
    justify-content: space-between;
    background-color: #2b2b2b;
    border: 1px solid #666;
    border-radius: 4px;
}

.fx {
    font-family: "DejaVu Serif", serif;
    font-size: 13px;
    color: #d0d0d0;
}

.formula-input {
    flex: 1;
    height: 86px;
    margin-left: 4px;
    padding: 5px 4px 0 9px;
    display: flex;
    align-items: flex-start;
    justify-content: space-between;
    background-color: #2b2b2b;
    border: 1px solid #666;
    border-radius: 4px;
}

/* Sheet */
.workspace {
    height: 245px;
    margin-top: 7px;
    display: flex;
    overflow: hidden;
}

.sheet {
    width: 1548px;
    flex: none;
}

table {
    width: 1548px;
    table-layout: fixed;
    border-collapse: separate;
    border-spacing: 0;
    font-family: Lato, sans-serif;
    font-size: 13px;
    letter-spacing: -0.35px;
    color: #000;
}

.c-rh { width: 25px; }
.c-a { width: 119px; }
.c-b { width: 141px; }
.c-c { width: 199px; }
.c-d { width: 76px; }
.c-j { width: 83px; }
.c-o { width: 77px; }
.c-p { width: 64px; }
.c-end { width: 2px; }

tr {
    height: 20px;
}

td {
    padding: 0 3px 0 3px;
    text-align: right;
    white-space: nowrap;
    overflow: hidden;
    background-color: #c5c5c5;
    border-right: 1px solid #b2b2b2;
    border-bottom: 1px solid #7f95ab;
    line-height: 18px;
}

td:nth-child(2),
td:nth-child(3),
td:nth-child(4) {
    text-align: left;
}

.band td {
    background-color: #a9b4bf;
    border-right-color: #a9b4bf;
}

td:nth-child(2) {
    padding-left: 2px;
    border-left: 2px solid #217346;
}

td:nth-child(16) {
    border-right: 2px solid #217346;
}

.band td.active {
    background-color: #deeaf6;
}

tr td.free,
tr.band td.free {
    background-color: #fff;
    border-right: 1px solid #d6d6d6;
    border-bottom: 1px solid #d6d6d6;
    border-left: none;
}

tr td.end,
tr.band td.end {
    border-right: none;
    padding: 0;
}

/* Column and row headers */
.cols {
    height: 19px;
}

.cols th {
    padding: 0;
    background-color: #646464;
    border-right: 1px solid #8c8c8c;
    font-family: "Open Sans", sans-serif;
    font-size: 12.5px;
    font-weight: 400;
    letter-spacing: 0;
    color: #eee;
    line-height: 18px;
}

.cols th.plain {
    background-color: #0c0c0c;
    border-right: 1px solid #444;
}

.cols th.end {
    border-right: none;
}

.cols th.corner {
    background-color: #0c0c0c;
    border-right: none;
    text-align: right;
    line-height: 0;
    vertical-align: bottom;
    padding: 0 3px 3px 0;
}

.corner svg {
    fill: #5c5c5c;
}

.rh,
.head th.rh {
    padding: 0;
    font-family: "Open Sans", sans-serif;
    font-size: 12.5px;
    font-weight: 400;
    letter-spacing: -0.2px;
    color: #f0f0f0;
    text-align: center;
    background-color: #646464;
    border: none;
    border-bottom: 1px solid #8c8c8c;
}

.head th.rh-dark {
    background-color: #0c0c0c;
    border-bottom: 1px solid #444;
}

.head {
    height: 21px;
}

.head th {
    padding: 0 1px 0 3px;
    background-color: #5b9bd5;
    border-top: 2px solid #217346;
    border-bottom: 2px solid #217346;
    color: #fff;
    font-weight: 700;
    text-align: left;
}

.hc {
    display: flex;
    align-items: center;
    justify-content: space-between;
    white-space: nowrap;
    line-height: 16px;
    font-size: 12.8px;
    letter-spacing: -0.1px;
}

.hc-text {
    font-size: 13.6px;
    letter-spacing: 0;
}

.fb {
    flex: none;
    width: 16px;
    height: 16px;
    display: flex;
    align-items: center;
    justify-content: center;
    background-color: #f0f0f0;
    border: 1px solid #bdbdbd;
}

.fb::after {
    content: "";
    border-left: 4px solid transparent;
    border-right: 4px solid transparent;
    border-top: 5px solid #666;
}

/* Scrollbar */
.scrollbar {
    width: 22px;
    flex: none;
    padding: 6px 0 0 0;
    display: flex;
    flex-direction: column;
    align-items: center;
    gap: 5px;
    border-right: 1px solid #333;
}

.scrollbar svg {
    fill: #a8a8a8;
}

.thumb {
    width: 8px;
    height: 41px;
    background-color: #8a8a8a;
    border-radius: 4px;
}

/* Queries & Connections panel */
.panel {
    flex: 1;
    padding: 0 13px;
}

.panel-head {
    height: 42px;
    padding-top: 2px;
    display: flex;
    align-items: center;
    gap: 19px;
}

.panel-head h2 {
    flex: 1;
    margin: 0;
    font-size: 14.300px;
    font-weight: 400;
    letter-spacing: 0;
    color: #f0f0f0;
}

.panel-head svg:first-of-type {
    margin-right: -1px;
}

.panel-head svg:last-child {
    margin-right: 5px;
}

.panel-body {
    height: 203px;
    background-color: #232323;
}

.panel-tabs {
    height: 28px;
    padding-top: 4px;
    display: flex;
    align-items: flex-start;
    font-size: 11px;
    line-height: 20px;
}

.ptab-on {
    width: 42px;
    height: 25px;
    font-weight: 600;
    border-bottom: 2px solid #fff;
}

.ptab-sep {
    width: 1px;
    height: 18px;
    margin: 0 9px 0 9px;
    background-color: #777;
}

.count {
    height: 25px;
    padding-top: 6px;
    font-size: 11px;
    line-height: 16px;
    border-bottom: 1px solid #bbb;
}

.query {
    height: 50px;
    padding: 4px 0 0 5px;
    display: flex;
    gap: 4px;
}

.query-on {
    margin-top: 9px;
    background-color: #555;
}

.qicon {
    flex: none;
    margin-top: 2px;
    fill: #f0f0f0;
}

.qicon path {
    fill: #232323;
}

.query-on .qicon path {
    fill: #555;
}

.qname {
    font-size: 13.500px;
    letter-spacing: 0;
    line-height: 18px;
    color: #c4c4c4;
}

.qrows {
    margin-top: 5px;
    font-size: 12px;
    letter-spacing: 0;
    line-height: 18px;
}
```
